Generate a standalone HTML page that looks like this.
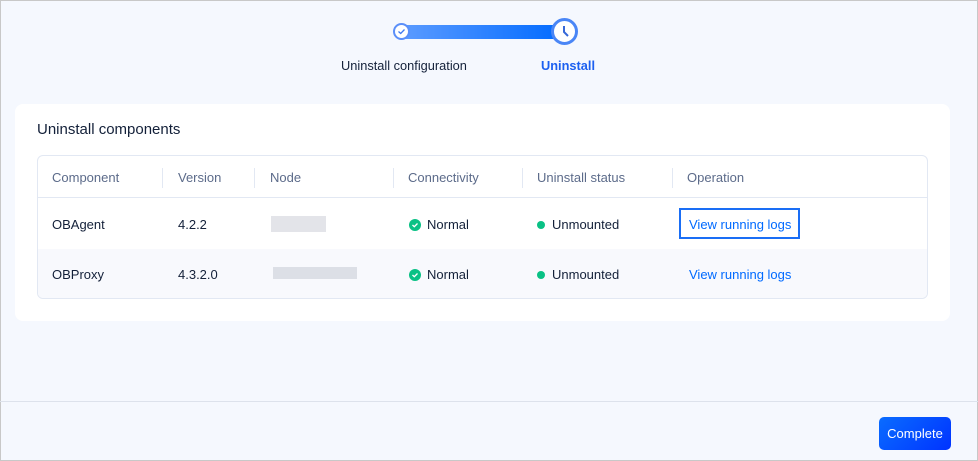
<!DOCTYPE html>
<html><head><style>
*{margin:0;padding:0;box-sizing:border-box}
body{width:978px;height:461px;background:#f5f8fe;font-family:"Liberation Sans",sans-serif;position:relative;overflow:hidden;font-size:13px;color:#132039}
.a{position:absolute}
.card{left:15px;top:104px;width:935px;height:217px;background:#fff;border-radius:8px}
.tbl{left:37px;top:155px;width:891px;height:144px;border:1px solid #e2e8f3;border-radius:6px;overflow:hidden;background:#fff}
.hd{color:#5c6b8a}
.sep{width:1px;height:20px;background:#e2e8f3;top:12px}
.dot{width:8px;height:8px;border-radius:50%;background:#0ac185}
.ok{width:12px;height:12px;border-radius:50%;background:#0ac185}
.link{color:#006aff}
</style></head><body>
<div class="a" style="left:0;top:0;width:978px;height:461px;border:1px solid #c8c8c8"></div>
<div class="a" style="left:402px;top:25px;width:164px;height:14px;background:linear-gradient(90deg,#5b9bff,#006aff)"></div>
<div class="a" style="left:393px;top:23px;width:17px;height:17px;border-radius:50%;border:2px solid #5b8ff9;background:#fff"></div>
<svg class="a" style="left:397px;top:27px" width="9" height="9" viewBox="0 0 9 9"><path d="M1.5 4.5 L3.7 6.5 L7.5 2.5" stroke="#3e78f0" stroke-width="1.3" fill="none"/></svg>
<div class="a" style="left:551px;top:18px;width:27px;height:27px;border-radius:50%;border:3px solid #4a86f6;background:#fff"></div>
<svg class="a" style="left:551px;top:18px" width="27" height="27"><path d="M13 8 V14 L17 18" stroke="#3668d8" stroke-width="2" fill="none"/></svg>
<div class="a" style="left:341px;top:58px;font-size:12.8px">Uninstall configuration</div>
<div class="a" style="left:541px;top:58px;font-weight:bold;color:#1c60f0;font-size:12.8px">Uninstall</div>
<div class="a card"></div>
<div class="a" style="left:37px;top:121px;font-size:15px">Uninstall components</div>
<div class="a tbl">
<div class="a" style="left:0;top:41px;width:100%;height:1px;background:#e2e8f3"></div>
<div class="a" style="left:0;top:93px;width:100%;height:51px;background:#f8f9fd"></div>
<div class="a sep" style="left:124px"></div><div class="a sep" style="left:216px"></div><div class="a sep" style="left:355px"></div><div class="a sep" style="left:484px"></div><div class="a sep" style="left:634px"></div>
<div class="a hd" style="left:14px;top:14px">Component</div>
<div class="a hd" style="left:140px;top:14px">Version</div>
<div class="a hd" style="left:232px;top:14px">Node</div>
<div class="a hd" style="left:370px;top:14px">Connectivity</div>
<div class="a hd" style="left:499px;top:14px">Uninstall status</div>
<div class="a hd" style="left:649px;top:14px">Operation</div>
<div class="a" style="left:14px;top:61px">OBAgent</div>
<div class="a" style="left:140px;top:61px">4.2.2</div>
<div class="a" style="left:233px;top:60px;width:55px;height:16px;background:#e3e4e9"></div>
<svg class="a" style="left:371px;top:63px" width="12" height="12"><circle cx="6" cy="6" r="6" fill="#0ac185"/><path d="M3.5 6 L5.3 7.7 L8.5 4.5" stroke="#fff" stroke-width="1.3" fill="none"/></svg><div class="a" style="left:389px;top:61px">Normal</div>
<div class="a dot" style="left:499px;top:65px"></div><div class="a" style="left:514px;top:61px">Unmounted</div>
<div class="a" style="left:641px;top:52px;width:121px;height:31px;border:2px solid #1a6ef5"></div>
<div class="a link" style="left:651px;top:61px">View running logs</div>
<div class="a" style="left:14px;top:111px">OBProxy</div>
<div class="a" style="left:140px;top:111px">4.3.2.0</div>
<div class="a" style="left:235px;top:111px;width:84px;height:12px;background:#dcdfe6"></div>
<svg class="a" style="left:371px;top:113px" width="12" height="12"><circle cx="6" cy="6" r="6" fill="#0ac185"/><path d="M3.5 6 L5.3 7.7 L8.5 4.5" stroke="#fff" stroke-width="1.3" fill="none"/></svg><div class="a" style="left:389px;top:111px">Normal</div>
<div class="a dot" style="left:499px;top:115px"></div><div class="a" style="left:514px;top:111px">Unmounted</div>
<div class="a link" style="left:651px;top:111px">View running logs</div>
</div>
<div class="a" style="left:0;top:401px;width:978px;height:1px;background:#dde2ec"></div>
<div class="a" style="left:879px;top:417px;width:72px;height:33px;border-radius:5px;background:linear-gradient(135deg,#0a6cff,#0033ff);color:#fff;text-align:center;line-height:33px">Complete</div>
</body></html>
